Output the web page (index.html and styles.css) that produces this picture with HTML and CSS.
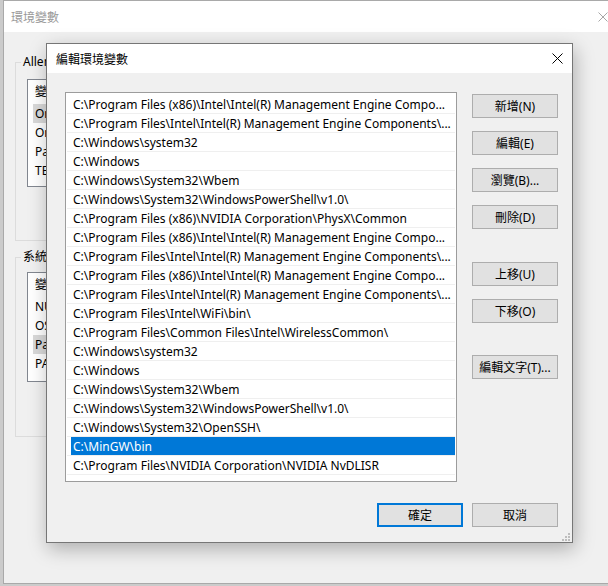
FILE: index.html
```html
<!DOCTYPE html>
<html lang="zh-Hant">
<head>
    <meta charset="UTF-8">
    <title>編輯環境變數</title>
    <link rel="stylesheet" href="styles.css">
</head>
<body>
    <div class="screen">
        <!-- background window: 環境變數 -->
        <div class="win">
            <div class="win-title">
                <span>環境變數</span>
                <svg class="win-close" width="10" height="10" viewBox="0 0 10 10">
                    <path d="M0.5 0.5 L9.5 9.5 M9.5 0.5 L0.5 9.5" stroke="#a6a6a6" stroke-width="1" fill="none"/>
                </svg>
            </div>
            <div class="win-body">
                <fieldset class="group">
                    <legend>Allen 的使用者變數(U)</legend>
                    <div class="vlist">
                        <div class="vhead">變數</div>
                        <div class="vrow hl">OneDrive</div>
                        <div class="vrow">OneDriveConsumer</div>
                        <div class="vrow">Path</div>
                        <div class="vrow">TEMP</div>
                    </div>
                </fieldset>
                <fieldset class="group group-sys">
                    <legend>系統變數(S)</legend>
                    <div class="vlist vlist-sys">
                        <div class="vhead">變數</div>
                        <div class="vrow">NUMBER_OF_PROCESSORS</div>
                        <div class="vrow">OS</div>
                        <div class="vrow hl">Path</div>
                        <div class="vrow">PATHEXT</div>
                    </div>
                </fieldset>
            </div>
        </div>

        <!-- dialog: 編輯環境變數 -->
        <div class="dialog">
            <div class="dlg-title">
                <span>編輯環境變數</span>
                <svg class="dlg-close" width="11" height="11" viewBox="0 0 11 11">
                    <path d="M0.5 0.5 L10.5 10.5 M10.5 0.5 L0.5 10.5" stroke="#000" stroke-width="1" fill="none"/>
                </svg>
            </div>
            <div class="dlg-body">
                <div class="dlg-main">
                    <div class="plist">
                        <div class="prow">C:\Program Files (x86)\Intel\Intel(R) Management Engine Compo...</div>
                        <div class="prow">C:\Program Files\Intel\Intel(R) Management Engine Components\...</div>
                        <div class="prow">C:\Windows\system32</div>
                        <div class="prow">C:\Windows</div>
                        <div class="prow">C:\Windows\System32\Wbem</div>
                        <div class="prow">C:\Windows\System32\WindowsPowerShell\v1.0\</div>
                        <div class="prow">C:\Program Files (x86)\NVIDIA Corporation\PhysX\Common</div>
                        <div class="prow">C:\Program Files (x86)\Intel\Intel(R) Management Engine Compo...</div>
                        <div class="prow">C:\Program Files\Intel\Intel(R) Management Engine Components\...</div>
                        <div class="prow">C:\Program Files (x86)\Intel\Intel(R) Management Engine Compo...</div>
                        <div class="prow">C:\Program Files\Intel\Intel(R) Management Engine Components\...</div>
                        <div class="prow">C:\Program Files\Intel\WiFi\bin\</div>
                        <div class="prow">C:\Program Files\Common Files\Intel\WirelessCommon\</div>
                        <div class="prow">C:\Windows\system32</div>
                        <div class="prow">C:\Windows</div>
                        <div class="prow">C:\Windows\System32\Wbem</div>
                        <div class="prow">C:\Windows\System32\WindowsPowerShell\v1.0\</div>
                        <div class="prow">C:\Windows\System32\OpenSSH\</div>
                        <div class="prow sel">C:\MinGW\bin</div>
                        <div class="prow">C:\Program Files\NVIDIA Corporation\NVIDIA NvDLISR</div>
                    </div>
                    <div class="side">
                        <button class="btn">新增(N)</button>
                        <button class="btn">編輯(E)</button>
                        <button class="btn">瀏覽(B)...</button>
                        <button class="btn">刪除(D)</button>
                        <button class="btn btn-gap">上移(U)</button>
                        <button class="btn">下移(O)</button>
                        <button class="btn btn-gap2">編輯文字(T)...</button>
                    </div>
                </div>
                <div class="dlg-foot">
                    <button class="btn btn-default">確定</button>
                    <button class="btn">取消</button>
                </div>
            </div>
            <svg class="grip" width="8" height="8" viewBox="0 0 8 8">
                <g fill="#bdbdbd">
                    <rect x="6" y="0" width="2" height="2"/>
                    <rect x="3" y="3" width="2" height="2"/>
                    <rect x="6" y="3" width="2" height="2"/>
                    <rect x="0" y="6" width="2" height="2"/>
                    <rect x="3" y="6" width="2" height="2"/>
                    <rect x="6" y="6" width="2" height="2"/>
                </g>
            </svg>
        </div>
    </div>
</body>
</html>
```

FILE: styles.css
```css
body {
    margin: 0;
    background: #cbcbcb;
    font-family: "Noto Sans", "Noto Sans CJK TC", sans-serif;
    font-size: 12px;
    color: #000;
}

.screen {
    position: relative;
    width: 608px;
    height: 586px;
    overflow: hidden;
}

/* background window */
.win {
    margin-left: 3px;
    width: 620px;
    height: 584px;
    box-sizing: border-box;
    border: 1px solid #a9a9a9;
    border-right: none;
    background: #f0f0f0;
}

.win-title {
    height: 31px;
    background: #fff;
    display: flex;
    align-items: center;
    padding-left: 7px;
    color: #999;
}

.win-close {
    margin-left: auto;
    margin-right: 15px;
}

.win-body {
    padding: 20px 0 0 11px;
}

.group {
    margin: 0;
    width: 545px;
    box-sizing: border-box;
    border: 1px solid #dcdcdc;
    padding: 7px 11px 53px 11px;
}

.group legend {
    padding: 0 2px;
    margin-left: -6px;
    line-height: 20px;
}

.group-sys {
    margin-top: 6px;
    padding-top: 5px;
    padding-bottom: 54px;
}

.vlist {
    height: 108px;
    box-sizing: border-box;
    border: 1px solid #828790;
    background: #fff;
}

.vlist-sys {
    height: 110px;
}

.vhead {
    height: 24px;
    line-height: 24px;
    padding-left: 7px;
}

.vrow {
    height: 19px;
    line-height: 20px;
    padding-left: 7px;
}

.vrow.hl {
    background: linear-gradient(to right, transparent 5px, #d9d9d9 5px);
}

/* dialog */
.dialog {
    position: absolute;
    left: 46px;
    top: 43px;
    width: 527px;
    height: 500px;
    box-sizing: border-box;
    border: 1px solid #767676;
    background: #f0f0f0;
    box-shadow: 2px 6px 18px rgba(0, 0, 0, 0.28);
    display: flex;
    flex-direction: column;
}

.dlg-title {
    height: 29px;
    background: #fff;
    display: flex;
    align-items: center;
    padding-left: 9px;
}

.dlg-close {
    margin-left: auto;
    margin-right: 9px;
}

.dlg-body {
    padding: 19px 14px 0 18px;
}

.dlg-main {
    display: flex;
}

.plist {
    width: 392px;
    height: 390px;
    box-sizing: border-box;
    border: 1px solid #9c9c9c;
    background: #fff;
    padding: 2px 1px 0 1px;
    overflow: hidden;
}

.prow {
    height: 18px;
    line-height: 20px;
    border-bottom: 1px solid #efefef;
    padding-left: 6px;
    white-space: nowrap;
    overflow: hidden;
}

.prow.sel {
    background: linear-gradient(to right, transparent 4px, #0078d7 4px);
    color: #fff;
}

.side {
    margin-left: 15px;
    padding-top: 2px;
    display: flex;
    flex-direction: column;
    gap: 13px;
}

.btn {
    width: 86px;
    height: 24px;
    box-sizing: border-box;
    border: 1px solid #adadad;
    background: #e1e1e1;
    font-family: "Noto Sans", "Noto Sans CJK TC", sans-serif;
    font-size: 12px;
    color: #000;
    padding: 0;
}

.btn-gap {
    margin-top: 20px;
}

.btn-gap2 {
    margin-top: 19px;
}

.dlg-foot {
    display: flex;
    justify-content: flex-end;
    gap: 9px;
    margin-top: 21px;
}

.btn-default {
    border: 2px solid #0078d7;
}

.grip {
    position: absolute;
    right: 2px;
    bottom: 1px;
}
```
